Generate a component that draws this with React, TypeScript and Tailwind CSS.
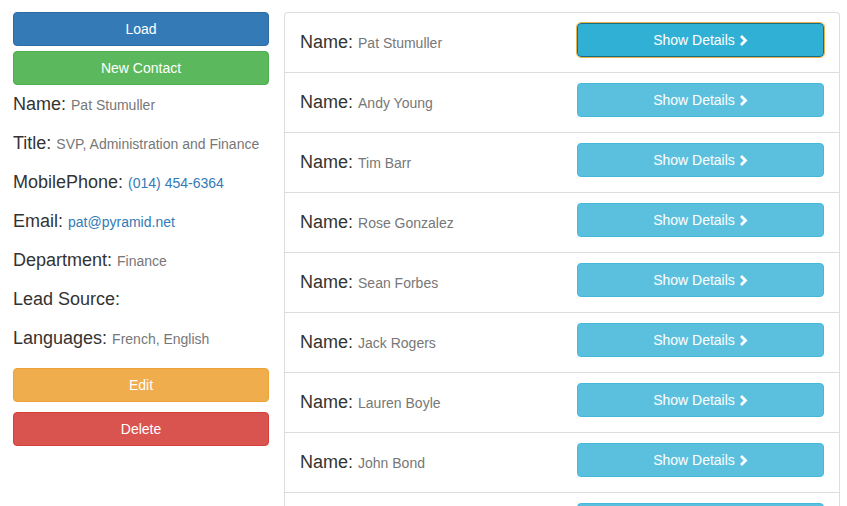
import type { ReactNode } from 'react';

const contact = {
    name: 'Pat Stumuller',
    title: 'SVP, Administration and Finance',
    mobilePhone: '(014) 454-6364',
    email: 'pat@pyramid.net',
    department: 'Finance',
    leadSource: '',
    languages: 'French, English',
};

const contacts = [
    'Pat Stumuller',
    'Andy Young',
    'Tim Barr',
    'Rose Gonzalez',
    'Sean Forbes',
    'Jack Rogers',
    'Lauren Boyle',
    'John Bond',
    'Stella Pavlova',
];

function Field({ label, children }: { label: string; children?: ReactNode }) {
    return (
        <h4 className="h-[19px] my-[10px] text-[18px] leading-[19px] text-[#333] whitespace-nowrap">
            {label}: <small className="text-[14px] leading-none text-[#777]">{children}</small>
        </h4>
    );
}

function Chevron() {
    return (
        <svg width="9" height="11" viewBox="0 0 9 11" className="ml-[4px] inline-block">
            <path d="M2 1 L6.5 5.5 L2 10" fill="none" stroke="white" strokeWidth="2.8" />
        </svg>
    );
}

export default function App() {
    const btn = 'block w-full h-[34px] rounded-[4px] border text-[14px] text-white text-center leading-[20px]';
    return (
        <div className="flex gap-[15px] px-[13px] pt-[12px] bg-white h-[506px] overflow-hidden font-['Liberation_Sans',Arial,sans-serif] text-[14px]">
            <div className="w-[256px] shrink-0">
                <button className={btn + ' bg-[#337ab7] border-[#2e6da4]'}>Load</button>
                <button className={btn + ' mt-[5px] bg-[#5cb85c] border-[#4cae4c]'}>New Contact</button>
                <div className="flex flex-col">
                    <Field label="Name">{contact.name}</Field>
                    <Field label="Title">{contact.title}</Field>
                    <Field label="MobilePhone">
                        <a className="text-[#337ab7]">{contact.mobilePhone}</a>
                    </Field>
                    <Field label="Email">
                        <a className="text-[#337ab7]">{contact.email}</a>
                    </Field>
                    <Field label="Department">{contact.department}</Field>
                    <Field label="Lead Source">{contact.leadSource}</Field>
                    <Field label="Languages">{contact.languages}</Field>
                </div>
                <button className={btn + ' mt-[10px] bg-[#f0ad4e] border-[#eea236]'}>Edit</button>
                <button className={btn + ' mt-[10px] bg-[#d9534f] border-[#d43f3a]'}>Delete</button>
            </div>

            <div className="w-[556px] shrink-0">
                <div className="border-x border-t border-[#ddd] rounded-t-[4px]">
                    {contacts.map((name, i) => (
                        <div
                            key={name}
                            className="flex items-start h-[60px] px-[15px] py-[10px] border-b border-[#ddd]"
                        >
                            <h4 className="w-[277px] shrink-0 my-[10px] text-[18px] leading-[1.1] text-[#333]">
                                Name: <small className="text-[14px] text-[#777]">{name}</small>
                            </h4>
                            <button
                                className={
                                    'flex items-center justify-center w-[247px] h-[34px] rounded-[4px] border text-[14px] text-white ' +
                                    (i === 0
                                        ? 'bg-[#31b0d5] border-[#1b6d85] outline-1 outline-[#e8b24c]'
                                        : 'bg-[#5bc0de] border-[#46b8da]')
                                }
                            >
                                Show Details
                                <Chevron />
                            </button>
                        </div>
                    ))}
                </div>
            </div>
        </div>
    );
}
